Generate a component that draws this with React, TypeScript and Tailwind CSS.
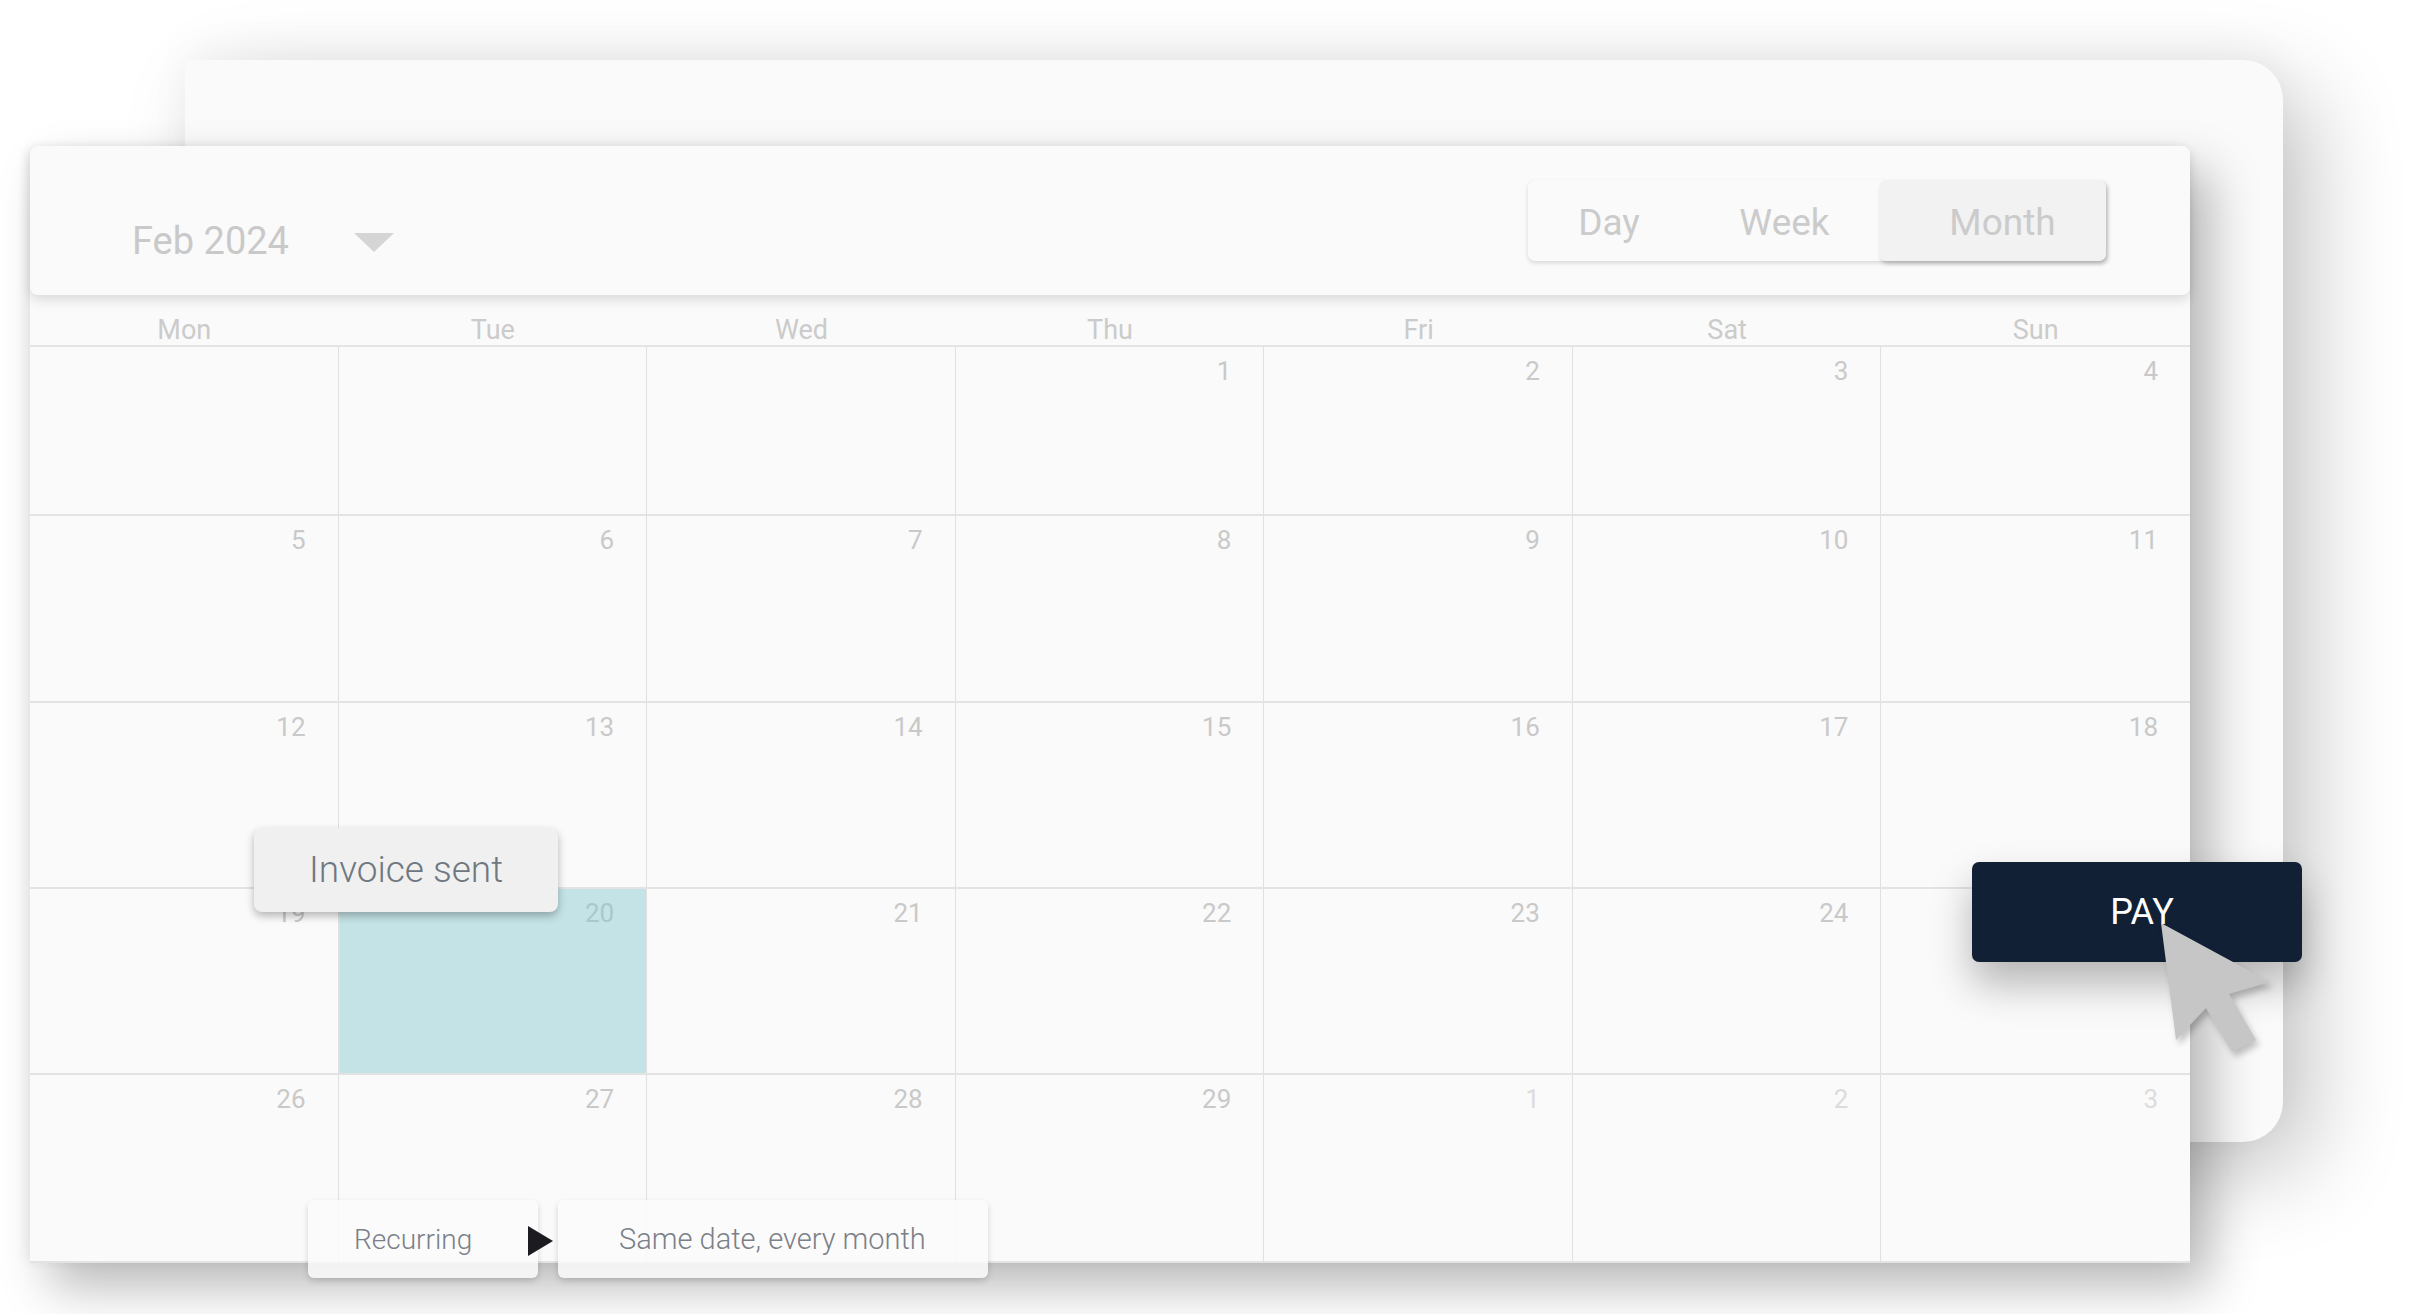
import React from "react"

const font = { fontFamily: "Roboto, 'Noto Sans', sans-serif" }

type Cell = { n?: number; next?: boolean; active?: boolean }

const rows: { h: string; cells: Cell[] }[] = [
  { h: "h-[169px]", cells: [{}, {}, {}, { n: 1 }, { n: 2 }, { n: 3 }, { n: 4 }] },
  { h: "h-[187px]", cells: [5, 6, 7, 8, 9, 10, 11].map((n) => ({ n })) },
  { h: "h-[186px]", cells: [12, 13, 14, 15, 16, 17, 18].map((n) => ({ n })) },
  {
    h: "h-[186px]",
    // 25 sits under the PAY button
    cells: [{ n: 19 }, { n: 20, active: true }, { n: 21 }, { n: 22 }, { n: 23 }, { n: 24 }, {}],
  },
  {
    h: "h-[188px]",
    cells: [
      { n: 26 },
      { n: 27 },
      { n: 28 },
      { n: 29 },
      { n: 1, next: true },
      { n: 2, next: true },
      { n: 3, next: true },
    ],
  },
]

const days = ["Mon", "Tue", "Wed", "Thu", "Fri", "Sat", "Sun"]

function Header() {
  return (
    <div className="relative z-10 flex h-[149px] items-center justify-between rounded-[8px] bg-[#fafafa] pl-[102px] pr-[84px] shadow-[0_5px_12px_rgba(0,0,0,0.13)]">
      <div className="mt-[40px] flex items-center">
        <span className="text-[38px] leading-none text-[#c9c9c9]">Feb 2024</span>
        <span className="ml-[65px] mt-[4px] h-0 w-0 border-l-[20px] border-r-[20px] border-t-[19px] border-l-transparent border-r-transparent border-t-[#d5d5d5]" />
      </div>
      <div className="flex h-[81px] items-stretch rounded-[7px] bg-[#fafafa] shadow-[0_2px_4px_rgba(0,0,0,0.14)]">
        <button className="w-[162px] pt-[5px] text-[37px] text-[#cbcbcb]">Day</button>
        <button className="w-[189px] pt-[5px] text-[37px] text-[#cbcbcb]">Week</button>
        <button className="w-[227px] rounded-[7px] bg-[#f2f2f2] pl-[20px] pt-[5px] text-[37px] text-[#cbcbcb] shadow-[2px_3px_4px_rgba(0,0,0,0.2)]">
          Month
        </button>
      </div>
    </div>
  )
}

function Grid() {
  return (
    <div className="flex flex-col">
      <div className="grid h-[52px] grid-cols-7 border-b-2 border-[#e4e4e4]">
        {days.map((d) => (
          <div key={d} className="flex items-end justify-center pb-[1px] text-[27px] leading-none text-[#cbcbcb]">
            {d}
          </div>
        ))}
      </div>
      {rows.map((row, i) => (
        <div key={i} className={`grid grid-cols-7 ${row.h} border-b-2 border-[#e3e3e3]`}>
          {row.cells.map((c, j) => (
            <div
              key={j}
              className={`pr-[32px] pt-[11px] text-right text-[26px] leading-none ${j < 6 ? "border-r border-[#e0e0e0]" : ""} ${
                c.active ? "border-l border-[#b8dadd] bg-[#c4e3e6] text-[#a8c9cc]" : c.next ? "text-[#dcdcdc]" : "text-[#c9c9c9]"
              }`}
            >
              {c.n}
            </div>
          ))}
        </div>
      ))}
    </div>
  )
}

export default function App() {
  return (
    <div className="relative h-[1314px] w-[2422px] overflow-hidden bg-white" style={font}>
      {/* back card */}
      <div className="absolute left-[185px] top-[60px] h-[1082px] w-[2098px] rounded-tl-[6px] rounded-r-[40px] bg-[#fafafa] shadow-[30px_30px_90px_rgba(0,0,0,0.22),0_-12px_40px_rgba(0,0,0,0.04)]" />

      {/* front card */}
      <div className="absolute left-[30px] top-[146px] h-[1116px] w-[2160px] rounded-t-[8px] bg-[#fafafa] shadow-[20px_25px_50px_rgba(0,0,0,0.28),-4px_0_12px_rgba(0,0,0,0.06)]">
        <Header />
        <Grid />
      </div>

      {/* invoice sent */}
      <div className="absolute left-[254px] top-[828px] flex h-[84px] w-[304px] items-center justify-center rounded-[8px] bg-[#f0f0f0] shadow-[0_4px_8px_rgba(0,0,0,0.28)]">
        <span className="text-[37px] font-light text-[#6f7780]">Invoice sent</span>
      </div>

      {/* recurring */}
      <div className="absolute left-[308px] top-[1200px] flex h-[78px] w-[230px] items-center rounded-[6px] bg-[#fafafa]/85 pl-[46px] pt-[2px] shadow-[0_3px_6px_rgba(0,0,0,0.16)]">
        <span className="text-[28px] font-light text-[#7b8088]">Recurring</span>
      </div>
      <span className="absolute left-[528px] top-[1226px] h-0 w-0 border-b-[15px] border-l-[25px] border-t-[15px] border-b-transparent border-l-[#1b1b20] border-t-transparent" />
      <div className="absolute left-[558px] top-[1200px] flex h-[78px] w-[430px] items-center rounded-[6px] bg-[#fafafa]/85 pl-[61px] pt-[2px] shadow-[0_3px_6px_rgba(0,0,0,0.16)]">
        <span className="text-[29px] font-light text-[#7b8088]">Same date, every month</span>
      </div>

      {/* pay button */}
      <div className="absolute left-[1972px] top-[862px] flex h-[100px] w-[330px] items-center justify-center rounded-[7px] bg-[#112035] shadow-[0_22px_40px_rgba(0,0,0,0.28)]">
        <span className="ml-[10px] text-[36px] font-normal text-white">PAY</span>
      </div>

      {/* cursor */}
      <svg
        className="absolute left-[2150px] top-[915px] drop-shadow-[3px_5px_3px_rgba(0,0,0,0.22)]"
        width="130"
        height="150"
        viewBox="0 0 130 150"
      >
        <path d="M11 8 L26 125 L56 93 L82 137 L106 125 L79 79 L120 67 Z" fill="#c6c6c6" />
      </svg>
    </div>
  )
}
